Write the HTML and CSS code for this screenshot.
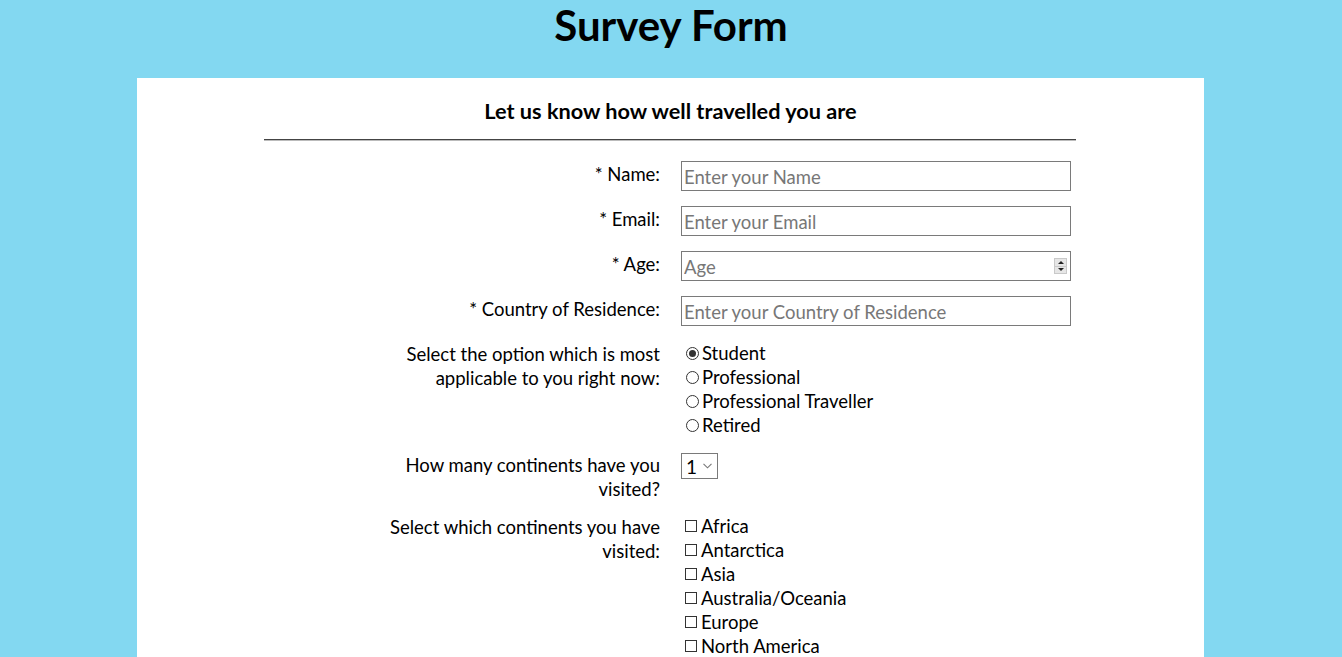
FILE: index.html
```html
<!DOCTYPE html>
<html lang="en">
<head>
<meta charset="utf-8">
<title>Survey Form</title>
<link rel="stylesheet" href="styles.css">
</head>
<body>
<h1 class="title">Survey Form</h1>
<main class="card">
  <h2 class="subtitle">Let us know how well travelled you are</h2>
  <hr class="rule">
  <form class="form">
    <div class="row">
      <label class="lbl" for="name">* Name:</label>
      <input class="field" id="name" type="text" placeholder="Enter your Name">
    </div>
    <div class="row">
      <label class="lbl" for="email">* Email:</label>
      <input class="field" id="email" type="text" placeholder="Enter your Email">
    </div>
    <div class="row">
      <label class="lbl" for="age">* Age:</label>
      <span class="numwrap">
        <input class="field" id="age" type="text" placeholder="Age">
        <span class="spin"><span class="up"></span><span class="dn"></span></span>
      </span>
    </div>
    <div class="row">
      <label class="lbl" for="country">* Country of Residence:</label>
      <input class="field" id="country" type="text" placeholder="Enter your Country of Residence">
    </div>
    <div class="row">
      <div class="lbl">Select the option which is most applicable to you right now:</div>
      <div class="list">
        <label class="opt"><input class="radio" type="radio" name="status" checked>Student</label>
        <label class="opt"><input class="radio" type="radio" name="status">Professional</label>
        <label class="opt"><input class="radio" type="radio" name="status">Professional Traveller</label>
        <label class="opt"><input class="radio" type="radio" name="status">Retired</label>
      </div>
    </div>
    <div class="row row-tight">
      <label class="lbl" for="count">How many continents have you visited?</label>
      <span class="selwrap">
        <select class="sel" id="count">
          <option>1</option><option>2</option><option>3</option><option>4</option>
          <option>5</option><option>6</option><option>7</option>
        </select>
        <svg class="chev" width="9" height="6" viewBox="0 0 9 6"><path d="M0.5 0.8 L4.5 4.8 L8.5 0.8" fill="none" stroke="#777" stroke-width="1.1"/></svg>
      </span>
    </div>
    <div class="row">
      <div class="lbl">Select which continents you have visited:</div>
      <div class="list">
        <label class="opt"><input class="check" type="checkbox">Africa</label>
        <label class="opt"><input class="check" type="checkbox">Antarctica</label>
        <label class="opt"><input class="check" type="checkbox">Asia</label>
        <label class="opt"><input class="check" type="checkbox">Australia/Oceania</label>
        <label class="opt"><input class="check" type="checkbox">Europe</label>
        <label class="opt"><input class="check" type="checkbox">North America</label>
        <label class="opt"><input class="check" type="checkbox">South America</label>
      </div>
    </div>
  </form>
</main>
</body>
</html>
```

FILE: styles.css
```css
* { box-sizing: border-box; }
html, body { margin: 0; }
body {
  background: #83d8f1;
  font-family: "Lato", "Open Sans", sans-serif;
  color: #000;
}
.title {
  margin: 0 0 28px;
  text-align: center;
  font-size: 42px;
  line-height: 50px;
  font-weight: 700;
}
.card {
  width: 1067px;
  margin-left: calc(50% - 534px);
  background: #fff;
  padding: 20px 0 40px;
}
.subtitle {
  margin: 0;
  text-align: center;
  font-size: 21.7px;
  line-height: 26px;
  font-weight: 700;
}
.rule {
  width: 812px;
  margin: 15px 0 20px 127px;
  border: 0;
  border-top: 1px solid #444;
  border-bottom: 1px solid #bbb;
  height: 0;
}
.form {
  width: 812px;
  margin: 0 0 0 127px;
  display: flex;
  flex-direction: column;
  gap: 15px;
}
.row {
  display: grid;
  grid-template-columns: 396px 1fr;
  column-gap: 21px;
  align-items: start;
}
.row-tight { margin-bottom: -2px; }
.lbl {
  justify-self: end;
  max-width: 272px;
  text-align: right;
  font-size: 18.5px;
  line-height: 24px;
  padding-top: 1px;
}
.field {
  width: 390px;
  height: 30px;
  border: 1px solid #7a7a7a;
  border-radius: 0;
  padding: 2px 2px 0;
  font-family: inherit;
  font-size: 18.5px;
  color: #000;
  background: #fff;
  outline: none;
}
.field::placeholder { color: #777; }
.numwrap {
  position: relative;
  width: 390px;
  height: 30px;
  display: block;
}
.spin {
  position: absolute;
  right: 4px;
  top: 7px;
  width: 13px;
  height: 16px;
  background: #e6e6e6;
  border: 1px solid #c9c9c9;
  display: flex;
  flex-direction: column;
}
.spin .up, .spin .dn {
  flex: 1;
  display: flex;
  align-items: center;
  justify-content: center;
}
.spin .up { border-bottom: 1px solid #c9c9c9; }
.spin .up::before {
  content: "";
  border-left: 3px solid transparent;
  border-right: 3px solid transparent;
  border-bottom: 3px solid #222;
}
.spin .dn::before {
  content: "";
  border-left: 3px solid transparent;
  border-right: 3px solid transparent;
  border-top: 3px solid #222;
}
.list {
  display: flex;
  flex-direction: column;
  padding-left: 4px;
}
.opt {
  display: flex;
  align-items: center;
  font-size: 18.5px;
  line-height: 24px;
}
.radio, .check {
  appearance: none;
  -webkit-appearance: none;
  margin: 0 3px 0 1px;
  width: 13px;
  height: 13px;
  border: 1px solid #333;
  background: #fff;
  flex: none;
}
.radio { border-radius: 50%; position: relative; }
.radio:checked::after {
  content: "";
  position: absolute;
  left: 2px;
  top: 2px;
  width: 7px;
  height: 7px;
  border-radius: 50%;
  background: #333;
}
.check { width: 12px; height: 12px; margin-left: 0; margin-right: 4px; }
.selwrap {
  position: relative;
  display: block;
  width: 37px;
  height: 26px;
  margin-top: 1px;
}
.sel {
  appearance: none;
  -webkit-appearance: none;
  width: 37px;
  height: 26px;
  border: 1px solid #7a7a7a;
  border-radius: 0;
  background: #fff;
  font-family: inherit;
  font-size: 19px;
  padding: 0 0 0 4px;
  color: #000;
}
.chev {
  position: absolute;
  right: 6px;
  top: 10px;
  pointer-events: none;
}
```
